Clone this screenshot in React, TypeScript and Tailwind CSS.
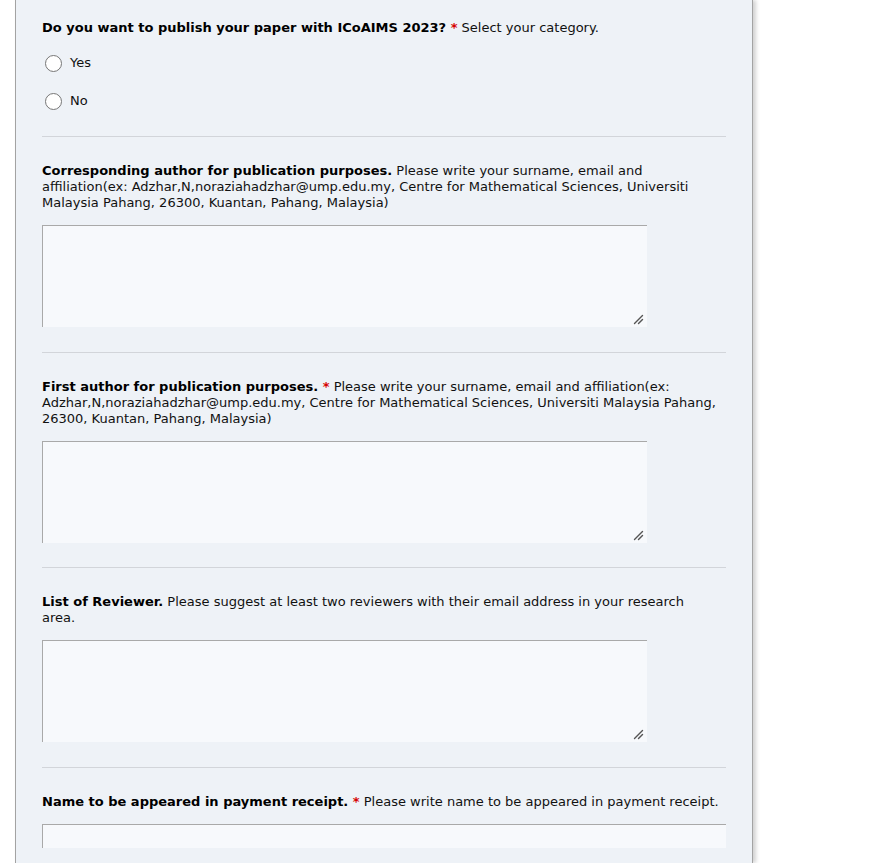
import React from "react";

function Radio({ label }: { label: string }) {
  return (
    <label className="flex h-6 items-center">
      <span className="ml-[3px] h-[17px] w-[17px] rounded-full border border-[#767676] bg-white" />
      <span className="ml-[8px]">{label}</span>
    </label>
  );
}

function Req() {
  return <span className="text-[#d60000] font-bold"> *</span>;
}

function Hr() {
  return <div className="h-px bg-[#d2d5da]" />;
}

function Area() {
  return (
    <div className="relative mt-[14px] h-[102px] w-[605px]">
      <textarea className="block h-full w-full resize-none border-t border-l border-r-0 border-b-0 border-[#a9a9a9] bg-[#f7f9fc] outline-none" />
      <svg className="absolute bottom-[2px] right-[3px]" width="11" height="11" viewBox="0 0 11 11">
        <path d="M1.5 9.5 L9.5 1.5" stroke="#555" strokeWidth="1.4" strokeLinecap="round" />
        <path d="M5.5 9.5 L9.5 5.5" stroke="#555" strokeWidth="1.4" strokeLinecap="round" />
      </svg>
    </div>
  );
}

export default function App() {
  return (
    <div
      className="h-[863px] w-[895px] overflow-hidden bg-white text-[13px] leading-4 text-[#111]"
      style={{ fontFamily: '"DejaVu Sans", Verdana, sans-serif' }}
    >
      <div className="ml-[15px] h-[863px] w-[738px] border-l border-r border-[#a3a3a3] bg-[#eef2f7] px-[26px] pt-[20px] shadow-[3px_0_4px_rgba(0,0,0,0.18)]">
        <p>
          <b className="text-black">Do you want to publish your paper with ICoAIMS 2023?</b>
          <Req /> Select your category.
        </p>
        <div className="mt-[15px] flex flex-col gap-[14px]">
          <Radio label="Yes" />
          <Radio label="No" />
        </div>
        <div className="mt-[23px]">
          <Hr />
        </div>

        <p className="mt-[26px]">
          <b className="text-black">Corresponding author for publication purposes.</b> Please write your surname, email and
          <br />
          affiliation(ex: Adzhar,N,noraziahadzhar@ump.edu.my, Centre for Mathematical Sciences, Universiti
          <br />
          Malaysia Pahang, 26300, Kuantan, Pahang, Malaysia)
        </p>
        <Area />
        <div className="mt-[25px]">
          <Hr />
        </div>

        <p className="mt-[26px]">
          <b className="text-black">First author for publication purposes.</b>
          <Req /> Please write your surname, email and affiliation(ex:
          <br />
          Adzhar,N,noraziahadzhar@ump.edu.my, Centre for Mathematical Sciences, Universiti Malaysia Pahang,
          <br />
          26300, Kuantan, Pahang, Malaysia)
        </p>
        <Area />
        <div className="mt-[24px]">
          <Hr />
        </div>

        <p className="mt-[26px]">
          <b className="text-black">List of Reviewer.</b> Please suggest at least two reviewers with their email address in your
          research
          <br />
          area.
        </p>
        <Area />
        <div className="mt-[25px]">
          <Hr />
        </div>

        <p className="mt-[26px]">
          <b className="text-black">Name to be appeared in payment receipt.</b>
          <Req /> Please write name to be appeared in payment receipt.
        </p>
        <input className="mt-[14px] block h-[24px] w-full border-t border-l border-[#a9a9a9] bg-[#f7f9fc] outline-none" />
      </div>
    </div>
  );
}
